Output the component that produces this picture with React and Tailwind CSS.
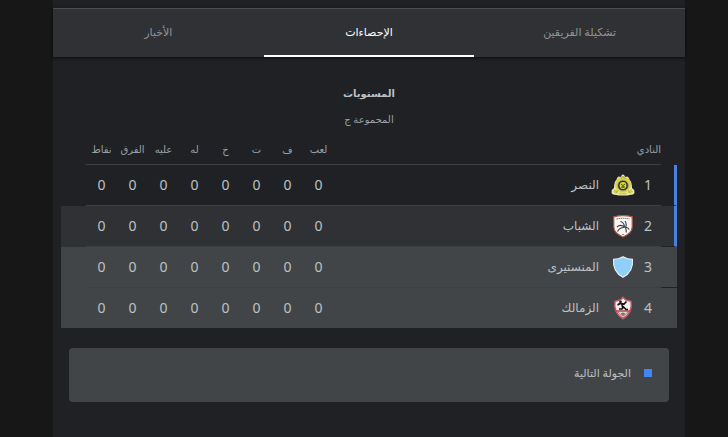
const stats = ["لعب", "ف", "ت", "خ", "له", "عليه", "الفرق", "نقاط"];

function NassrCrest() {
  return (
    <svg viewBox="0 0 24 24" className="size-6 shrink-0" aria-hidden="true">
      <path d="M10.500 2.500Q12 .3 13.500 2.500L14 4l2.500-.5 1.500 1.500.5 2 1.500 1.500.8 3.500.2 3 2.200 2 .3 3-1.500 1.500-3.500.5-2 .5H7.500l-2-.5-3.500-.5L.5 20l.3-3L3 15l.2-3L4 8.500 5.500 7 6 5l1.500-1.500L10 4z" fill="#e9e7bb" />
      <circle cx="12" cy="11.500" r="8" fill="#dcd34a" />
      <path d="M3.500 16 2 19l3.500 1.500L8 19zM20.500 16l1.500 3-3.500 1.500L16 19zM8.500 19.500h7l1 2h-9z" fill="#d9cf38" />
      <path d="m5 20 1.500-2.500M19 20l-1.500-2.500M10 6l2-3 2 3" stroke="#a79f35" strokeWidth=".8" fill="none" />
      <circle cx="12" cy="12.500" r="5.400" fill="#2a3a2c" stroke="#a9ab80" strokeWidth="1" />
      <circle cx="12" cy="12.500" r="3.400" fill="#e3d824" />
      <path d="m9.800 11 2.200 1.500 2.200-1.500M12 12.500v2.500M10 14h4" stroke="#3d4a22" strokeWidth=".9" fill="none" />
    </svg>
  );
}

function ShababCrest() {
  return (
    <svg viewBox="0 0 24 24" className="size-6 shrink-0" aria-hidden="true">
      <path d="M2.800 2.800Q12 .3 21.200 2.800V13q0 6-9.200 10Q2.800 19 2.800 13z" fill="#f9f7f5" stroke="#b3553f" strokeWidth="1.200" />
      <path d="M5.500 5Q12 3.600 18.500 5" fill="none" stroke="#6a625c" strokeWidth="1" strokeDasharray="1.500 .6" />
      <path d="M9.500 7.500Q13 8.500 13.500 12.500M14 7q2.200 3 .5 6.500M6 13q3.500-3.500 8 .5M6.500 17.500q2-4 6.500-4M14.500 13.500q1 3 .8 5M14.500 13q2.500.5 3.800 2.500" fill="none" stroke="#3b3b3d" strokeWidth="1.100" />
      <path d="M11 20.500h2" stroke="#888" />
    </svg>
  );
}

function MonastirCrest() {
  return (
    <svg viewBox="0 0 24 24" className="size-6 shrink-0" aria-hidden="true">
      <path d="M12 1.700Q16.500 4.300 21.500 4.300 22.500 17 12 22.300 1.500 17 2.500 4.300 7.500 4.300 12 1.700z" fill="#90d0f8" stroke="#e8f4fa" strokeWidth="1.100" />
    </svg>
  );
}

function ZamalekCrest() {
  return (
    <svg viewBox="0 0 24 24" className="size-6 shrink-0" aria-hidden="true">
      <path d="M12 1.200 14.500 3.800 20 5.200q2 11.300-8 17.800Q2 16.500 4 5.200l5.500-1.400z" fill="#f5ecec" stroke="#c05766" strokeWidth="1.400" />
      <path d="M4.500 15h15" stroke="#b84759" strokeWidth="1.600" />
      <circle cx="9.500" cy="5.800" r="1.300" fill="#151515" />
      <path d="M6.500 9 9 7.500l4 .5 2.500-2.500M11 8l.5 3.500M8 13h3l1.500-2 2.500 2.500h2" fill="none" stroke="#151515" strokeWidth="1.700" />
      <path d="M8 16.500h8l-4 4.500z" fill="#c5c3a4" />
      <path d="M10 18h4M12 16.500V20" stroke="#58663c" strokeWidth="1" />
      <path d="m7 16 5 6 5-6" stroke="#b84759" strokeWidth=".8" fill="none" />
    </svg>
  );
}

const teams = [
  { rank: 1, name: "النصر", Crest: NassrCrest, row: "h-[41px]", line: "border-b border-b-[#3c4043]", gap: "border-b border-b-[#202124]", edge: "border-r-[3px] border-r-[#4a80e0]" },
  { rank: 2, name: "الشباب", Crest: ShababCrest, row: "h-[41px] bg-[#303134]", line: "border-b border-b-[#3c4043]", gap: "border-b border-b-[#202124]", edge: "border-r-[3px] border-r-[#4a80e0]" },
  { rank: 3, name: "المنستيرى", Crest: MonastirCrest, row: "h-[41px] bg-[#424547]", line: "border-b border-b-[#3c4043]", gap: "border-b border-b-[#202124]", edge: "" },
  { rank: 4, name: "الزمالك", Crest: ZamalekCrest, row: "h-10 bg-[#424547]", line: "", gap: "", edge: "" },
];

const tabs = ["تشكيلة الفريقين", "الإحصاءات", "الأخبار"];

function Tabs() {
  return (
    <nav className="relative flex h-[49px] border-t border-[#4c4d50] bg-[#303134] shadow-[0_1px_3px_rgba(0,0,0,0.7)]">
      {tabs.map((tab, i) => (
        <button
          key={tab}
          type="button"
          className={
            i === 1
              ? "flex-1 border-b-2 border-white text-[11px] font-medium text-white"
              : "flex-1 border-b-2 border-transparent text-[11px] font-medium text-[#929497]"
          }
        >
          {tab}
        </button>
      ))}
    </nav>
  );
}

function Standings() {
  return (
    <table className="w-full table-fixed border-separate border-spacing-0 text-sm text-[#bdc1c6]">
      <colgroup>
        <col className="w-4" />
        <col />
        {stats.map((s) => <col key={s} className="w-[31px]" />)}
        <col className="w-[25px]" />
      </colgroup>
      <thead>
        <tr className="h-[30px] text-[10px] text-[#9aa0a6]">
          <td />
          <th scope="col" className="border-b border-[#3c4043] p-0 text-start font-normal">النادي</th>
          {stats.map((s) => (
            <th key={s} scope="col" className="border-b border-[#3c4043] p-0 text-center font-normal whitespace-nowrap">{s}</th>
          ))}
          <td />
        </tr>
      </thead>
      <tbody>
        {teams.map(({ rank, name, Crest, row, line, gap, edge }) => (
          <tr key={rank} className={row}>
            <td className={`p-0 ${gap} ${edge}`} />
            <th scope="row" className={`p-0 font-normal ${line}`}>
              <div className="flex items-center gap-1 ps-1">
                <span className="w-[18px] text-center">{rank}</span>
                <Crest />
                <span className="ps-2 text-xs">{name}</span>
              </div>
            </th>
            {stats.map((s) => (
              <td key={s} className={`p-0 text-center ${line}`}>0</td>
            ))}
            <td />
          </tr>
        ))}
      </tbody>
    </table>
  );
}

export default function App() {
  return (
    <div dir="rtl" className="min-h-screen bg-[#171717] pr-[43px] pl-[53px] font-['Noto_Sans','DejaVu_Sans',sans-serif]">
      <main className="min-h-screen bg-[#202124] pt-2">
        <Tabs />
        <section className="px-2 pt-6">
          <h2 className="text-center text-[10px] leading-6 font-bold text-[#bdc1c6]">المستويات</h2>
          <p className="pb-0.5 text-center text-[10px] leading-7 text-[#9aa0a6]">المجموعة ج</p>
          <Standings />
          <div className="mx-2 mt-5 flex h-[54px] items-center gap-[13px] rounded bg-[#424547] px-[17px] pb-1 text-[11px] text-[#bdc1c6]">
            <span className="size-2 bg-[#4285f4]" />
            الجولة التالية
          </div>
        </section>
      </main>
    </div>
  );
}
